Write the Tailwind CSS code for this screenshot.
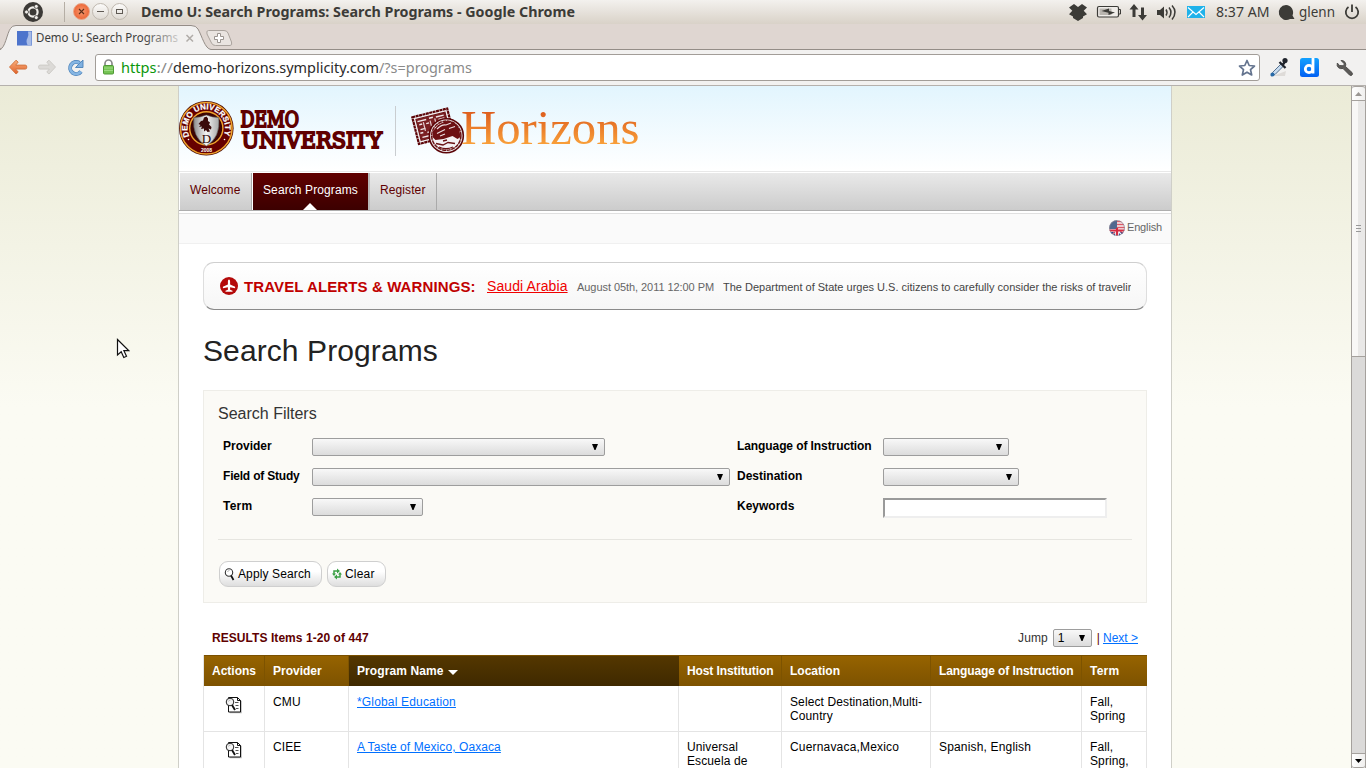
<!DOCTYPE html>
<html lang="en">
<head>
<meta charset="utf-8">
<title>Demo U: Search Programs: Search Programs</title>
<script src="https://cdn.jsdelivr.net/npm/@tailwindcss/browser@4"></script>
</head>
<body class="w-[1366px] h-[768px] overflow-hidden bg-white font-['Liberation_Sans',Arial,sans-serif] text-xs leading-[14px] text-black">
<div class="w-[1366px] h-[768px] flex flex-col overflow-hidden relative">

  <!-- Desktop panel -->
  <header class="h-6 shrink-0 flex items-start bg-linear-to-b from-[#f3f1ee] to-[#d9d2c8] text-[#3c3c3c]">
    <svg class="w-[140px] h-6 shrink-0" viewBox="0 0 140 24">
      <circle cx="33" cy="12" r="10" fill="#3c3a37"/>
      <circle cx="33" cy="12" r="4.600" fill="none" stroke="#f0eeea" stroke-width="2.200"/>
      <g fill="#f0eeea" stroke="#3c3a37" stroke-width=".8"><circle cx="26.500" cy="12" r="2"/><circle cx="36.300" cy="6.400" r="2"/><circle cx="36.300" cy="17.600" r="2"/></g>
      <path d="M64.500 2v20" stroke="#b5aea5"/>
      <defs><radialGradient id="close"><stop offset="0" stop-color="#f79a70"/><stop offset="1" stop-color="#ec6636"/></radialGradient>
      <linearGradient id="wb" x2="0" y2="1"><stop stop-color="#fdfcfb"/><stop offset="1" stop-color="#dfdad3"/></linearGradient></defs>
      <circle cx="81.500" cy="11.500" r="8" fill="url(#close)" stroke="#e9a88c"/>
      <path d="M79 9l5 5M84 9l-5 5" stroke="#5c2c18" stroke-width="1.100"/>
      <circle cx="100.500" cy="11.500" r="8" fill="url(#wb)" stroke="#bfb8af"/><path d="M97 11.500h7" stroke="#5f5a54"/>
      <circle cx="119.500" cy="11.500" r="8" fill="url(#wb)" stroke="#bfb8af"/><rect x="116.500" y="9.500" width="6" height="4" fill="none" stroke="#5f5a54"/>
    </svg>
    <svg class="h-6 w-[440px] shrink-0" viewBox="0 0 440 24"><text x="1" y="17" font-family="'Noto Sans',sans-serif" font-weight="700" font-size="14" fill="#3c3b37" textLength="434" lengthAdjust="spacingAndGlyphs">Demo U: Search Programs: Search Programs - Google Chrome</text></svg>
    <svg class="h-6 w-[306px] shrink-0 ml-auto" viewBox="1060 0 306 24">
      <g fill="#3c3b37">
        <path d="M1069 7.500l5-3.500 4 3 4-3 5 3.500-3.300 3.300 3.300 3.400-4 2.300v1.500l-5 3-5-3v-1.500l-4-2.300 3.300-3.400z"/>
        <path d="M1134 4l4.500 5.500h-3v7.500h-3V9.500h-3zM1142.500 20.500l-4.500-5.500h3V7.500h3V15h3z"/>
      </g>
      <rect x="1097.500" y="6.500" width="21" height="10.500" rx="1.500" fill="#efece8" stroke="#3c3b37" stroke-width="1.200"/>
      <rect x="1099.500" y="8.500" width="12" height="6.500" fill="#b9b5af"/><path d="M1119 9.500h1.500v4.500h-1.500" fill="none" stroke="#3c3b37"/>
      <path d="M1101.500 11l7.500-2.500v2.500l6 1.500-6.500 2.500v-2.300z" fill="#3c3b37"/>
      <path d="M1157 10h3l4-3.500v12l-4-3.500h-3z" fill="#3c3b37"/>
      <path d="M1166 9.500q2 3 0 6M1169 7.500q4 4.800 0 10M1172 5.500q6 6.500 0 14" fill="none" stroke="#3c3b37" stroke-width="1.500"/>
      <rect x="1187" y="6" width="18" height="12" fill="#1fb2ea"/><path d="M1188 7.500l8 7 8-7M1188 17l5-5M1204 17l-5-5" fill="none" stroke="#fff" stroke-width="1.100"/>
      <text x="1216" y="17" font-family="'Noto Sans',sans-serif" font-size="13.500" fill="#3c3b37" textLength="53.500" lengthAdjust="spacingAndGlyphs">8:37 AM</text>
      <path d="M1286 5a7.500 7.500 0 1 0 4 14l4.500 0-2-3.500a7.500 7.500 0 0 0-6.500-10.500z" fill="#3c3b37"/>
      <text x="1299" y="17" font-family="'Noto Sans',sans-serif" font-size="13.500" fill="#3c3b37" textLength="36" lengthAdjust="spacingAndGlyphs">glenn</text>
      <path d="M1348.500 7a6.200 6.200 0 1 0 7 0M1352 4.500v7.500" fill="none" stroke="#3c3b37" stroke-width="1.800"/>
    </svg>
  </header>

  <!-- Tab strip -->
  <div class="h-[26px] shrink-0 bg-[#dfd6d1]">
    <svg class="w-[1366px] h-[26px] block" viewBox="0 24 1366 26">
      <defs><linearGradient id="fade"><stop offset=".75" stop-color="#3c3c3c"/><stop offset="1" stop-color="#3c3c3c" stop-opacity=".2"/></linearGradient></defs>
      <path d="M0 49.500h1366" stroke="#948d87"/>
      <path d="M0 50C5 49 7 33 10.500 28.500Q12 25.500 16 25.500H191Q196 25.500 198 29C202 36 205 49 211 49.500V50.500H0z" fill="#f2f1f0"/>
      <path d="M0 49C5 49 7 33 10.500 28.500Q12 25.500 16 25.500H191Q196 25.500 198 29C202 36 205 49 211 49.500" fill="none" stroke="#948d87"/>
      <rect x="17" y="31" width="15" height="14.500" fill="#4d74cc"/><path d="M28 31.500h3.500v13.500h-4q-2-4 0-7 1.500-3 .5-6.500z" fill="#a7bbe6"/>
      <text x="36" y="42" font-family="'Noto Sans',sans-serif" font-size="12" fill="url(#fade)" textLength="142" lengthAdjust="spacingAndGlyphs">Demo U: Search Programs</text>
      <path d="M186.500 35l6.500 6.500M193 35l-6.500 6.500" stroke="#b0aca8" stroke-width="1.500"/>
      <path d="M208.500 30.500H224Q227 30.500 228 33L231.500 42Q232.500 45.500 230 45.500H215.500Q212.500 45.500 211.500 43L207 34Q206 30.500 208.500 30.500z" fill="#e9e4e0" stroke="#aaa39d"/>
      <path d="M217.500 33.500h3v3h3v3h-3v3h-3v-3h-3v-3h3z" fill="#fff" stroke="#9b9590"/>
    </svg>
  </div>

  <!-- Toolbar -->
  <div class="h-9 shrink-0 flex items-start bg-[#f2f1f0] border-b border-[#b5b1ad]">
    <svg class="w-[95px] h-[34px] shrink-0" viewBox="0 50 95 34">
      <defs><linearGradient id="bk" x2="0" y2="1"><stop stop-color="#f9b07c"/><stop offset="1" stop-color="#e0602a"/></linearGradient></defs>
      <path d="M9.500 67l6.500-6.800 2.200 1.900-2.500 3h9.600q1.500 0 1.500 2t-1.500 2H15.700l2.500 3-2.200 1.900z" fill="url(#bk)" stroke="#d0713c" stroke-width=".9" stroke-linejoin="round"/>
      <path d="M55.500 67l-6.500-6.800-2.200 1.900 2.500 3h-9.300q-1.500 0-1.500 2t1.500 2h9.300l-2.500 3 2.200 1.900z" fill="#dcdad7" stroke="#cbc8c4" stroke-width=".9" stroke-linejoin="round"/>
      <path d="M81 71.500A6 6 0 1 1 79.500 63" fill="none" stroke="#4a81b8" stroke-width="4"/>
      <path d="M83 60v7.500h-7.500z" fill="#7fb0e0" stroke="#4a81b8" stroke-width=".9" stroke-linejoin="round"/>
      <path d="M81 71.500A6 6 0 1 1 79.500 63" fill="none" stroke="#85b5e3" stroke-width="2.600"/>
    </svg>
    <div class="w-[1165px] h-[27px] mt-1 bg-white border border-[#a29d98] rounded-[3px] flex items-center justify-between">
      <svg class="w-[400px] h-[25px]" viewBox="96 55 400 25">
        <path d="M105 66v-2.500a3.500 3.500 0 0 1 7 0V66" fill="none" stroke="#8a8a8a" stroke-width="1.700"/>
        <rect x="103.500" y="65.500" width="10" height="8.500" rx="1" fill="#76c455" stroke="#4f9a35"/><path d="M104 68h9M104 70.500h9" stroke="#9edb83"/>
        <g font-family="'Noto Sans',sans-serif" font-size="14" fill="#8a8a8a"><text x="121" y="73" fill="#0a970a" textLength="35.500" lengthAdjust="spacingAndGlyphs">https</text><text x="156.500" y="73" textLength="16.500" lengthAdjust="spacingAndGlyphs">://</text><text x="173" y="73" fill="#2b2b2b" textLength="206" lengthAdjust="spacingAndGlyphs">demo-horizons.symplicity.com</text><text x="379" y="73" textLength="93" lengthAdjust="spacingAndGlyphs">/?s=programs</text></g>
      </svg>
      <svg class="w-5 h-5 mr-0.5" viewBox="0 0 20 20"><path d="M10 2.500l2.200 5 5.300.5-4 3.600 1.200 5.400L10 14.200 5.300 17l1.200-5.400-4-3.600 5.300-.5z" fill="#fff" stroke="#64748f" stroke-width="1.700" stroke-linejoin="round"/></svg>
    </div>
    <svg class="w-[106px] h-[34px] shrink-0" viewBox="1260 50 106 34">
      <path d="M1273 76h12l1-5z" fill="#dedbd8"/>
      <path d="M1281 64l-8.500 8.500-1.500 3.500 4-1.500 8.500-8.500z" fill="#c7dbef" stroke="#54708f"/><circle cx="1272.500" cy="74.500" r="2" fill="#286aa8"/>
      <path d="M1279.500 62l6 6M1283 64.500l2.500-3.500" stroke="#20242c" stroke-width="2.300"/><circle cx="1285" cy="60.500" r="2.600" fill="#20242c"/>
      <defs><linearGradient id="dg" x2="0" y2="1"><stop stop-color="#12a1ff"/><stop offset="1" stop-color="#0260f2"/></linearGradient></defs>
      <rect x="1300" y="58" width="19" height="19" rx="2.500" fill="url(#dg)"/><circle cx="1309" cy="69" r="3.700" fill="none" stroke="#fff" stroke-width="2.800"/><path d="M1313 58v15.500" stroke="#fff" stroke-width="2.800"/>
      <path d="M1341 60.500l3.500 3.500-1.500 1.800-3.500-.3-2.200-2.500q-.8 3 1.200 4.700 2 1.500 4.500.8l6.500 6.500q1.500 1 2.500 0t0-2.500l-6.500-6q1-2.500-.8-4.700-1.500-1.500-3.700-1.300z" fill="#5c5a58" stroke="#4a4846" stroke-width=".9"/>
    </svg>
  </div>

  <!-- Viewport -->
  <div class="h-[682px] shrink-0 flex">
    <main class="w-[1351px] h-[682px] overflow-hidden flex justify-center pl-[178px] pr-[179px] bg-linear-to-b from-[#ebebd7] to-[#fbfbf3] to-[320px]">
      <div class="w-[994px] h-[682px] shrink-0 border-x border-[#cfcfc8] bg-white overflow-hidden">

        <div class="h-[85px] bg-linear-to-b from-[#e2f5fe] to-white">
          <svg class="w-[470px] h-[85px] block" viewBox="179 86 470 85">
            <defs>
              <linearGradient id="hz" gradientUnits="userSpaceOnUse" x1="0" y1="110" x2="0" y2="145"><stop stop-color="#dc5a1c"/><stop offset="1" stop-color="#f9a13a"/></linearGradient>
              <linearGradient id="sh"><stop stop-color="#8c8c8c"/><stop offset=".5" stop-color="#f4f4f4"/><stop offset="1" stop-color="#a8a8a8"/></linearGradient>
              <path id="ring" d="M189.300 136.200A18.800 18.800 0 1 1 223.300 136.200"/>
            </defs>
            <circle cx="206.300" cy="128.300" r="27.300" fill="#4a0a05"/>
            <circle cx="206.300" cy="128.300" r="25.800" fill="#660000" stroke="#f0a32c" stroke-width="1.500"/>
            <circle cx="206.300" cy="128.300" r="16.600" fill="#3d0503" stroke="#f0a32c" stroke-width="1.400"/>
            <path d="M193.800 117.500q6 0 12.500-2.500 6.500 2.500 12.500 2.500 2 20-12.500 28.500-14.500-8.500-12.500-28.500z" fill="url(#sh)" stroke="#555" stroke-width=".6"/>
            <path d="M198.500 124l2.500-3 2-.5 1-3 2.500-1 1.500 2v2.500l2 1.500-1 2 2.500 2.500-.5 2.500-2.500-1 1.500 3-2.500.5-1.500-2-2 1.500v-3l-3 .5 1-2.500-3 .5 1.500-2z" fill="#3a0a0a"/>
            <text x="206.500" y="142.500" text-anchor="middle" font-family="'Liberation Serif',serif" font-size="13" fill="#2b0505">D</text>
            <text font-family="'Liberation Sans',sans-serif" font-weight="700" font-size="8" fill="#fff" stroke="#fff" stroke-width=".25"><textPath href="#ring" textLength="74" lengthAdjust="spacingAndGlyphs">DEMO UNIVERSITY</textPath></text>
            <text x="206.500" y="152" text-anchor="middle" font-family="'Liberation Sans',sans-serif" font-weight="700" font-size="5" fill="#fff">2008</text>
            <circle cx="188.500" cy="139.500" r=".8" fill="#fff"/><circle cx="224.500" cy="139.500" r=".8" fill="#fff"/>
            <g font-family="'DejaVu Serif',serif" font-size="21.800" fill="#600000" stroke="#600000" stroke-width="2" stroke-linejoin="miter">
              <text x="240.500" y="127.100" textLength="58.500" lengthAdjust="spacingAndGlyphs">DEMO</text>
              <text x="241.500" y="147.500" textLength="140.500" lengthAdjust="spacingAndGlyphs">UNIVERSITY</text>
            </g>
            <path d="M395.500 106v50" stroke="#c9cdd0"/>
            <g transform="rotate(-14 433 126)">
              <rect x="415" y="112.500" width="36" height="27.500" fill="#f0eef0" stroke="#5c0508" stroke-width="2.200" stroke-dasharray="3 .5"/>
              <rect x="418" y="115.500" width="30" height="21.500" fill="#7a2023" stroke="#6a1214"/>
              <path d="M419 118h9M431 117.500h4M438 118h8M420 121.500h3M427 122h3M440 121h6M420 126.500h5M419 130h3M426 131h4M420 134.500h9M436 124.500h5" stroke="#f0e8ea" stroke-width="1.400"/>
              <path d="M424.500 120v9M431.500 120v8M436.500 119v4" stroke="#e2cccf" stroke-width="1.200"/>
            </g>
            <circle cx="446.300" cy="135.700" r="17" fill="#f0eef0" stroke="#5c0508" stroke-width="1.600"/>
            <circle cx="446.300" cy="135.700" r="14.600" fill="#f4f1f3" stroke="#6a1214" stroke-width="1.500" stroke-dasharray="4 .6"/>
            <path d="M433 131l5-6 8-4 8 1 5 6 1.500 9-3 2-5-3-9 3-8 1-3-3z" fill="#6d1013"/>
            <path d="M437 129q5-5 9-4l5-2M437 133.500l8-4M449 128.500l6-2M440 136l5-2" stroke="#ecdfe2" stroke-width="1.100" fill="none"/>
            <path d="M436 143.500l7 1.500 5-2.500 7 1M439 147q7 3.500 14 0M443 141l4-1" fill="none" stroke="#6a1214" stroke-width="1.300"/>
            <text x="461" y="143.500" font-family="'Liberation Serif',serif" font-size="49.500" fill="url(#hz)" textLength="178.500" lengthAdjust="spacingAndGlyphs">Horizons</text>
          </svg>
        </div>

        <nav class="h-10 border-y border-t-[#e8e8e8] border-b-[#aeaeae] pt-px pl-px bg-white text-[#600000] leading-[34px] tracking-[0.1px]">
          <div class="h-[37px] flex items-stretch bg-linear-to-b from-[#e9e9e9] to-[#cccccc]">
            <div class="w-[72px] pl-[10px] border-r border-[#aaa]">Welcome</div>
            <div class="w-[118px] pl-[10px] border-l border-r-2 border-l-white border-r-[#b8b8b8] bg-linear-to-b from-[#600000] to-[#3c0000] bg-clip-padding text-white relative">Search Programs
              <svg class="absolute bottom-0 left-[50px] w-[14px] h-[7px]" viewBox="0 0 14 7"><path d="M0 7L7 0l7 7z" fill="#fff"/></svg>
            </div>
            <div class="w-[67px] pl-[10px] border-r border-[#aaa]">Register</div>
          </div>
        </nav>

        <div class="mt-0.5 h-[31px] border-y border-t-[#e0e0e0] border-b-[#f0f0f0] bg-[#fafafa] flex items-start justify-end pt-[6px] pr-[9px] gap-0.5 text-[11px] text-[#666]">
          <svg class="w-4 h-4" viewBox="0 0 16 16">
            <defs><clipPath id="fl"><circle cx="8" cy="8" r="7.800"/></clipPath></defs>
            <g clip-path="url(#fl)"><rect width="16" height="16" fill="#f3f3f5"/><path d="M0 0h8v9H0z" fill="#50688f"/><path d="M8 1.500h8M8 4.500h8M8 7.500h8" stroke="#dd5a68" stroke-width="1.300"/><path d="M0 12h5l-3 4zM11 12h5v4h-2zM6 13v3H3zM10 13v3h3z" fill="#244a94"/><path d="M0 10.500h16M8 8v8" stroke="#d62b40" stroke-width="2.200"/><path d="M10 10l5 4M6 12l-4 3" stroke="#d62b40"/></g>
            <circle cx="8" cy="8" r="7.500" fill="none" stroke="#8b8492" stroke-width=".7"/>
          </svg>
          <span class="tracking-[-0.15px]">English</span>
        </div>

        <div class="px-6 pt-[18px]">
          <!-- Alert ticker -->
          <div class="h-12 rounded-[11px] border border-t-[#cfcfcf] border-x-[#dedede] border-b-[#8a8a8a] bg-linear-to-b from-white to-[#f6f6f6] flex items-center pl-4 pr-[15px] whitespace-nowrap">
            <svg class="w-[18px] h-[18px] shrink-0" viewBox="0 0 18 18"><circle cx="9" cy="9" r="9" fill="#b40a0a"/><path d="M9 2.500q1.100 0 1.100 2v3l5 2.300v1.400l-5-1v2.500l2.400 1v1.100H5.500v-1.100l2.400-1v-2.500l-5 1V9.800l5-2.300v-3q0-2 1.100-2z" fill="#fff"/></svg>
            <span class="ml-1.5 w-[243px] shrink-0 text-[15px] leading-5 font-bold tracking-[0.11px] text-[#c00000] pt-0.5">TRAVEL ALERTS &amp; WARNINGS:</span>
            <a class="w-[90px] shrink-0 text-sm leading-5 tracking-[0.1px] text-[#f00000] underline">Saudi Arabia</a>
            <span class="w-[146px] shrink-0 text-[11px] tracking-[-0.06px] text-[#666] pt-0.5">August 05th, 2011 12:00 PM</span>
            <span class="flex-1 min-w-0 overflow-hidden text-[11px] text-[#444] pt-0.5">The Department of State urges U.S. citizens to carefully consider the risks of traveling</span>
          </div>

          <h1 class="mt-[23px] h-9 text-[30px] leading-[35px] tracking-[0.1px] text-[#222]">Search Programs</h1>

          <!-- Filters -->
          <section class="mt-[21px] h-[213px] border border-[#eeede8] bg-[#fbfaf6] px-[14px]">
            <h2 class="pt-[13px] text-base leading-[19px] text-[#333]">Search Filters</h2>
            <div class="mt-2 pl-[5px] pt-[7px] grid grid-cols-[89px_425px_146px_1fr] auto-rows-[30px] font-bold">
              <span class="pt-px">Provider</span>
              <div class="w-[293px] h-[18px] rounded-[2px] border border-[#9d9d9d] bg-linear-to-b from-[#f8f8f8] to-[#dcdcdc] flex items-center justify-end pr-1.5"><svg class="w-[6px] h-[6px]" viewBox="0 0 6 6"><path d="M0 0h6L3.500 6h-1z"/></svg></div>
              <span class="pt-px tracking-[-0.09px]">Language of Instruction</span>
              <div class="w-[126px] h-[18px] rounded-[2px] border border-[#9d9d9d] bg-linear-to-b from-[#f8f8f8] to-[#dcdcdc] flex items-center justify-end pr-1.5"><svg class="w-[6px] h-[6px]" viewBox="0 0 6 6"><path d="M0 0h6L3.500 6h-1z"/></svg></div>
              <span class="pt-px tracking-[-0.2px]">Field of Study</span>
              <div class="w-[418px] h-[18px] rounded-[2px] border border-[#9d9d9d] bg-linear-to-b from-[#f8f8f8] to-[#dcdcdc] flex items-center justify-end pr-1.5"><svg class="w-[6px] h-[6px]" viewBox="0 0 6 6"><path d="M0 0h6L3.500 6h-1z"/></svg></div>
              <span class="pt-px">Destination</span>
              <div class="w-[136px] h-[18px] rounded-[2px] border border-[#9d9d9d] bg-linear-to-b from-[#f8f8f8] to-[#dcdcdc] flex items-center justify-end pr-1.5"><svg class="w-[6px] h-[6px]" viewBox="0 0 6 6"><path d="M0 0h6L3.500 6h-1z"/></svg></div>
              <span class="pt-px tracking-[0.2px]">Term</span>
              <div class="w-[111px] h-[18px] rounded-[2px] border border-[#9d9d9d] bg-linear-to-b from-[#f8f8f8] to-[#dcdcdc] flex items-center justify-end pr-1.5"><svg class="w-[6px] h-[6px]" viewBox="0 0 6 6"><path d="M0 0h6L3.500 6h-1z"/></svg></div>
              <span class="pt-px">Keywords</span>
              <div class="w-[224px] h-5 bg-white border-2 border-t-[#9a9a9a] border-l-[#9a9a9a] border-r-[#eee] border-b-[#eee]"></div>
            </div>
            <div class="mt-[11px] border-t border-[#e6e5e0] pt-[21px] pl-px flex gap-[5px]">
              <div class="w-[103px] h-[26px] rounded-[9px] border border-[#cfcfcf] bg-linear-to-b from-white from-40% to-[#dedede] flex items-center pl-1 gap-[3px]">
                <svg class="w-[11px] h-[13px]" viewBox="0 0 11 13"><circle cx="5" cy="4.500" r="3.700" fill="#fff" stroke="#333" stroke-width="1.100"/><path d="M3.500 4a2 2 0 0 1 2-1.500" fill="none" stroke="#999" stroke-width=".7"/><path d="M7 7.500l2.500 4.500" stroke="#111" stroke-width="1.700"/></svg>
                <span class="tracking-[0.12px]">Apply Search</span>
              </div>
              <div class="w-[59px] h-[26px] rounded-[9px] border border-[#cfcfcf] bg-linear-to-b from-white from-40% to-[#dedede] flex items-center pl-1 gap-[3px]">
                <svg class="w-[10px] h-3" viewBox="0 0 10 12"><path d="M2 6V3h3.500M8 6v3H4.500" fill="none" stroke="#3ba045" stroke-width="1.500"/><path d="M5 .5L8 3 5 5.500zM5 6.500L2 9l3 2.500zM0 5.500h4L2 8zM6 6.500h4L8 4z" fill="#3ba045"/></svg>
                <span class="tracking-[0.2px]">Clear</span>
              </div>
            </div>
          </section>

          <!-- Results bar -->
          <div class="h-[52px] pt-[17px] pl-[9px] pr-[9px] flex items-center">
            <strong class="text-[#600000] tracking-[0.06px]">RESULTS Items 1-20 of 447</strong>
            <span class="ml-auto text-[#333] tracking-[0.1px]">Jump</span>
            <div class="ml-[5px] w-[39px] h-[18px] rounded-[2px] border border-[#9d9d9d] bg-linear-to-b from-[#f8f8f8] to-[#dcdcdc] flex items-center justify-between pl-1 pr-1.5">1<svg class="w-[6px] h-[6px]" viewBox="0 0 6 6"><path d="M0 0h6L3.500 6h-1z"/></svg></div>
            <span class="ml-[5px] mr-[3px] text-[#600000]">|</span><a class="text-[#0070ff] underline">Next &gt;</a>
          </div>

          <!-- Results table -->
          <div class="border-x border-[#e4e4e4] whitespace-nowrap tracking-[0.11px]">
            <div class="-mr-px h-[31px] grid grid-cols-[61px_84px_330px_103px_149px_151px_1fr] text-white font-bold leading-[30px] tracking-normal bg-linear-to-b from-[#966300] to-[#7d5200] border-t border-[#7a5000]">
              <div class="pl-2 border-r border-[#7d5300]">Actions</div>
              <div class="pl-2 border-r border-[#7d5300]">Provider</div>
              <div class="pl-2 bg-linear-to-b from-[#543700] to-[#3f2900] flex items-center gap-[4px] tracking-[0.1px]">Program Name<svg class="w-[10px] h-[5px] mt-[3px]" viewBox="0 0 10 5"><path d="M0 0h10L5 5z" fill="#fff"/></svg></div>
              <div class="pl-2 border-r border-[#7d5300] tracking-[-0.1px]">Host Institution</div>
              <div class="pl-2 border-r border-[#7d5300]">Location</div>
              <div class="pl-2 border-r border-[#7d5300] tracking-[-0.1px]">Language of Instruction</div>
              <div class="pl-2 tracking-[0.2px]">Term</div>
            </div>
            <div class="h-[46px] grid grid-cols-[61px_84px_330px_103px_149px_151px_1fr] border-b border-[#e4e4e4]">
              <div class="border-r border-[#e4e4e4] pt-[10px] pl-[21px]"><svg class="w-[18px] h-[18px]" viewBox="0 0 18 18"><path d="M4 1.500h9l3 3v12H4z" fill="#bbb" transform="translate(.8 .8)"/><path d="M3.500 1.500h9l3 3v11.500h-12z" fill="#fff" stroke="#111"/><path d="M12.500 1.500v3h3" fill="none" stroke="#111"/><path d="M10 6.500h3.500M10.500 9.500h3M11 12.500h2.500" stroke="#555"/><circle cx="5" cy="6" r="3.800" fill="#f4f4f4" stroke="#222"/><path d="M3.500 5.500a2 2 0 0 1 2-1.500" fill="none" stroke="#999" stroke-width=".7"/><path d="M7 9l3 5" stroke="#111" stroke-width="1.900"/></svg></div>
              <div class="border-r border-[#e4e4e4] pl-2 pt-[9px]">CMU</div>
              <div class="border-r border-[#e4e4e4] pl-2 pt-[9px]"><a class="text-[#0070ff] underline tracking-[0.17px]">*Global Education</a></div>
              <div class="border-r border-[#e4e4e4]"></div>
              <div class="border-r border-[#e4e4e4] pl-2 pt-[9px]">Select Destination,Multi-<br>Country</div>
              <div class="border-r border-[#e4e4e4]"></div>
              <div class="pl-2 pt-[9px]">Fall,<br>Spring</div>
            </div>
            <div class="h-[60px] grid grid-cols-[61px_84px_330px_103px_149px_151px_1fr]">
              <div class="border-r border-[#e4e4e4] pt-[9px] pl-[21px]"><svg class="w-[18px] h-[18px]" viewBox="0 0 18 18"><path d="M4 1.500h9l3 3v12H4z" fill="#bbb" transform="translate(.8 .8)"/><path d="M3.500 1.500h9l3 3v11.500h-12z" fill="#fff" stroke="#111"/><path d="M12.500 1.500v3h3" fill="none" stroke="#111"/><path d="M10 6.500h3.500M10.500 9.500h3M11 12.500h2.500" stroke="#555"/><circle cx="5" cy="6" r="3.800" fill="#f4f4f4" stroke="#222"/><path d="M3.500 5.500a2 2 0 0 1 2-1.500" fill="none" stroke="#999" stroke-width=".7"/><path d="M7 9l3 5" stroke="#111" stroke-width="1.900"/></svg></div>
              <div class="border-r border-[#e4e4e4] pl-2 pt-2">CIEE</div>
              <div class="border-r border-[#e4e4e4] pl-2 pt-2"><a class="text-[#0070ff] underline tracking-[0.08px]">A Taste of Mexico, Oaxaca</a></div>
              <div class="border-r border-[#e4e4e4] pl-2 pt-2">Universal<br>Escuela de</div>
              <div class="border-r border-[#e4e4e4] pl-2 pt-2 tracking-[0.18px]">Cuernavaca,Mexico</div>
              <div class="border-r border-[#e4e4e4] pl-2 pt-2 tracking-[0.17px]">Spanish, English</div>
              <div class="pl-2 pt-2">Fall,<br>Spring,</div>
            </div>
          </div>
        </div>
      </div>
    </main>

    <!-- Scrollbar -->
    <div class="w-[15px] h-[682px] flex flex-col bg-[#dbdad9] border-x border-[#a5a19d]">
      <div class="h-[15px] bg-linear-to-r from-white to-[#f0efee] border-y border-[#a5a19d] rounded-t-[3px] flex items-center justify-center"><svg class="w-[7px] h-1" viewBox="0 0 7 4"><path d="M0 4L3.500 0 7 4z" fill="#9a9692"/></svg></div>
      <div class="h-[256px] bg-linear-to-r from-[#f8f7f6] from-50% to-[#e9e8e7] to-50% border-b border-[#a5a19d] flex flex-col items-center justify-center gap-0.5">
        <i class="block w-[5px] h-px bg-[#999]"></i><i class="block w-[5px] h-px bg-[#999]"></i><i class="block w-[5px] h-px bg-[#999]"></i>
      </div>
      <div class="mt-auto h-[15px] bg-linear-to-r from-white to-[#f0efee] border-y border-[#a5a19d] rounded-b-[3px] flex items-center justify-center"><svg class="w-[7px] h-1" viewBox="0 0 7 4"><path d="M0 0h7L3.500 4z"/></svg></div>
    </div>
  </div>

  <!-- Mouse pointer -->
  <svg class="absolute left-[116px] top-[338px] w-[14px] h-[21px]" viewBox="0 0 14 21"><path d="M1.500 1.500v15.500l3.700-3.300 2.600 5.800 2.700-1.200-2.600-5.600h5z" fill="#fff" stroke="#111" stroke-width="1.200"/></svg>
</div>
</body>
</html>
